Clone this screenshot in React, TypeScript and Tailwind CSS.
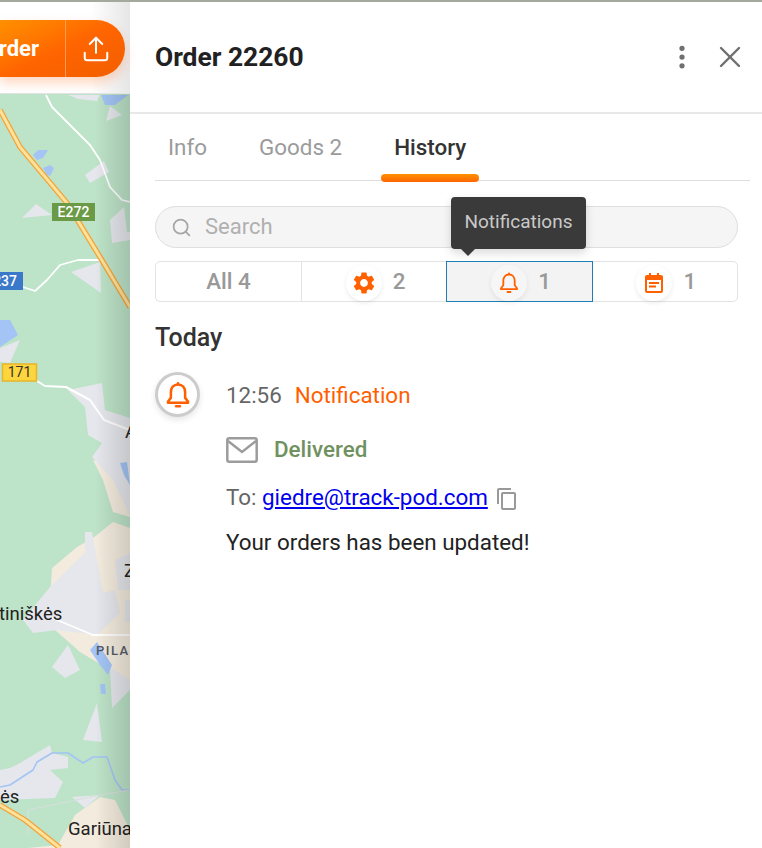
import { MoreVertical, Search, Upload, X } from "lucide-react";
import type { ReactNode } from "react";

function Bell({ className, stroke }: { className: string; stroke: string }) {
  return (
    <svg viewBox="0 0 24 24" className={className} fill="none" stroke="currentColor" strokeWidth={stroke}>
      <path d="M12 3.500c-3.600 0-5.700 2.700-5.700 6.200v4.600L4 17.200v1h16v-1l-2.300-2.900V9.700c0-3.500-2.100-6.200-5.700-6.200z" strokeLinejoin="round" />
      <path d="M10.500 21h3" strokeLinecap="round" />
      <circle cx="12" cy="2.500" r="1" fill="currentColor" stroke="none" />
    </svg>
  );
}

function Gear() {
  return (
    <svg viewBox="0 0 24 24" className="w-[26px] h-[26px] text-[#ff6000]" fill="currentColor">
      <path d="M19.140 12.940c.04-.3.06-.61.06-.94 0-.32-.02-.64-.07-.94l2.030-1.580c.18-.14.23-.41.12-.61l-1.920-3.320c-.12-.22-.37-.29-.59-.22l-2.390.96c-.5-.38-1.030-.7-1.620-.94l-.36-2.540c-.04-.24-.24-.41-.48-.41h-3.840c-.24 0-.43.17-.47.41l-.36 2.540c-.59.24-1.130.57-1.620.94l-2.390-.96c-.22-.08-.47 0-.59.22L2.740 8.870c-.12.21-.08.47.12.61l2.030 1.580c-.05.3-.09.63-.09.94s.02.64.07.94l-2.030 1.580c-.18.14-.23.41-.12.61l1.920 3.320c.12.22.37.29.59.22l2.390-.96c.5.38 1.030.7 1.620.94l.36 2.540c.05.24.24.41.48.41h3.840c.24 0 .44-.17.47-.41l.36-2.540c.59-.24 1.130-.56 1.620-.94l2.390.96c.22.08.47 0 .59-.22l1.920-3.320c.12-.22.07-.47-.12-.61l-2.010-1.580zM12 15.600c-1.980 0-3.600-1.620-3.600-3.600s1.620-3.600 3.600-3.600 3.600 1.620 3.600 3.600-1.620 3.600-3.600 3.600z" />
    </svg>
  );
}

function Planner() {
  return (
    <svg viewBox="0 0 24 24" className="w-[24px] h-[24px] text-[#ff6000]" fill="currentColor">
      <path d="M5 4h2V2h2v2h6V2h2v2h2a2 2 0 0 1 2 2v14a2 2 0 0 1-2 2H5a2 2 0 0 1-2-2V6a2 2 0 0 1 2-2zm0 5v11h14V9H5zm2 2h10v2H7v-2zm0 3.500h7v2H7v-2z" />
    </svg>
  );
}

function MapView() {
  return (
    <svg viewBox="0 94 130 754" className="w-[130px] h-[754px] block">
      <defs>
        <linearGradient id="edge" x1="0" x2="1" y1="0" y2="0">
          <stop offset="0" stopColor="#000" stopOpacity="0" />
          <stop offset="1" stopColor="#000" stopOpacity="0.14" />
        </linearGradient>
      </defs>
      <rect x="0" y="94" width="130" height="754" fill="#bde3c8" />

      <g fill="#f3ebdd">
        <polygon points="52,568 77,547 93,538 113,522 130,528 130,680 110,670 80,652 55,630 50,600" />
        <polygon points="93,460 103,480 113,512 130,517 130,470" />
        <polygon points="28,848 58,845 75,815 100,797 115,800 130,830 130,848" />
      </g>
      <g fill="#e5e7ec">
        <polygon points="68,95 100,95 97,101 78,99" />
        <polygon points="110,106 122,115 106,121" />
        <polygon points="85,175 104,161 109,172 90,183" />
        <polygon points="22,218 36,204 52,215 42,216" />
        <polygon points="110,220 124,207 127,232 130,232 130,240 112,243" />
        <polygon points="71,272 100,262 101,293" />
        <polygon points="0,348 20,340 10,363 0,362" />
        <polygon points="68,390 102,383 105,410 130,418 130,517 125,505 113,480 92,457 102,443 88,435 85,407" />
        <polygon points="85,532 92,532 103,593 115,590 120,613 97,635 57,630 33,633 23,620 50,587 85,553" />
        <polygon points="115,560 130,553 130,590 118,590" />
        <polygon points="125,600 130,600 130,622 125,622" />
        <polygon points="52,667 68,645 80,670 65,678" />
        <polygon points="110,667 130,680 130,690 112,708" />
        <polygon points="83,740 97,703 102,742" />
        <polygon points="20,763 50,745 52,753 68,757 68,768 50,770 63,782 55,798 0,800 0,770 10,768" />
        <polygon points="72,797 100,795 85,808" />
      </g>
      <g fill="#a3c4f5">
        <polygon points="33,155 38,150 48,150 43,158 37,160" />
        <polygon points="43,168 50,165 54,168 50,176 47,175" />
        <polygon points="101,95 128,95 115,105 105,105" />
        <polygon points="0,320 10,320 18,335 0,347" />
        <polygon points="120,463 127,462 130,485 124,475" />
        <polygon points="90,650 97,642 112,665 108,675 100,665" />
        <polygon points="100,684 105,684 106,694 101,694" />
      </g>

      <g fill="none" strokeLinejoin="round">
        <polyline points="46,95 52,107 90,145 100,160 110,187 122,200 130,202" stroke="#fff" strokeWidth="1.800" />
        <polyline points="100,260 78,260 60,265 47,280 35,291 23,287" stroke="#fff" strokeWidth="1.800" />
        <polyline points="37,381 45,386 66,387 90,400 104,420 130,430" stroke="#fff" strokeWidth="2" />
        <polyline points="50,617 93,635 130,635" stroke="#fff" strokeWidth="1.800" />
        <polyline points="0,787 10,785 33,770 37,762 52,753 68,753 83,763 93,757 107,757 115,780 122,790 130,790" stroke="#a3c4f5" strokeWidth="1.600" />
        <polyline points="28,835 28,810 100,795 130,790" stroke="#d5dfdc" strokeWidth="1.200" />
        <polyline points="0,110 20,147 67,203 100,257 130,307" stroke="#f2a33a" strokeWidth="5.500" />
        <polyline points="0,110 20,147 67,203 100,257 130,307" stroke="#fde29b" strokeWidth="3" />
        <polyline points="0,805 25,820 60,848" stroke="#f2a33a" strokeWidth="5.500" />
        <polyline points="0,805 25,820 60,848" stroke="#fde29b" strokeWidth="3" />
      </g>

      <rect x="52" y="203" width="43" height="18" fill="#6a9a45" />
      <text x="73.500" y="217" textAnchor="middle" fontSize="14" fontWeight="500" fill="#fff" fontFamily="Roboto, sans-serif">E272</text>
      <rect x="0" y="272" width="23" height="18" fill="#3a78c9" />
      <text x="17" y="286" textAnchor="end" fontSize="14" fontWeight="500" fill="#fff" fontFamily="Roboto, sans-serif">237</text>
      <rect x="2.500" y="364" width="34" height="17" fill="#fdd53c" stroke="#e9b52b" strokeWidth="1.500" />
      <text x="19.500" y="377" textAnchor="middle" fontSize="14" fill="#333" fontFamily="Roboto, sans-serif">171</text>

      <g fontFamily="Roboto, sans-serif" fill="#222" fontSize="18.500">
        <text x="-1" y="620">tiniškės</text>
        <text x="0" y="803">ės</text>
        <text x="68" y="835">Gariūna</text>
        <text x="125" y="438">A</text>
        <text x="124" y="577">Z</text>
      </g>
      <text x="96" y="655" fontFamily="Roboto, sans-serif" fontSize="13" fontWeight="500" letterSpacing="1.500" fill="#555b66">PILA</text>

      <rect x="95" y="94" width="35" height="754" fill="url(#edge)" />
    </svg>
  );
}

function FilterCell({ icon, count, active }: { icon: ReactNode; count: string; active?: boolean }) {
  return (
    <div
      className={
        active
          ? "flex-1 h-[41px] -my-px flex items-center justify-center gap-[11px] pl-[3px] bg-[#f3f3f3] border border-[#1c7fb5]"
          : "flex-1 h-full flex items-center justify-center gap-[11px] pl-[3px]"
      }
    >
      <span className={active ? "w-[36px] h-[36px] mt-[2px] rounded-full bg-[#f6f6f6] shadow-[0_2px_5px_rgba(0,0,0,0.08)] flex items-center justify-center" : "w-[36px] h-[36px] mt-[2px] rounded-full bg-white shadow-[0_2px_5px_rgba(0,0,0,0.08)] flex items-center justify-center"}>
        {icon}
      </span>
      <span className="text-[22.4px] font-medium text-[#999]">{count}</span>
    </div>
  );
}

export default function App() {
  return (
    <div className="w-[762px] h-[848px] overflow-hidden bg-white flex flex-col font-['Roboto',sans-serif]">
      <div className="h-[2px] shrink-0 bg-[#a4a9a0]" />
      <div className="flex flex-1 min-h-0">
        <div className="w-[130px] shrink-0 flex flex-col">
          <div className="h-[92px] shrink-0 bg-gradient-to-r from-white from-70% to-[#e6e6e6] flex justify-end pt-[18px] pr-[5px] border-b border-[#e3e3e3]">
            <div className="h-[57px] w-[125px] flex rounded-r-full bg-gradient-to-br from-[#ff9000] via-[#ff6500] to-[#f25e00] shadow-[0_6px_12px_rgba(255,96,0,0.25)]">
              <span className="w-[65px] flex items-center justify-end pr-[26px] text-[22px] font-bold text-white whitespace-nowrap">rder</span>
              <span className="flex-1 flex items-center justify-center border-l border-[#ff9a55]">
                <Upload className="w-[30px] h-[30px] text-white" strokeWidth={1.600} />
              </span>
            </div>
          </div>
          <MapView />
        </div>

        <div className="flex-1 min-w-0 flex flex-col">
          <div className="h-[112px] shrink-0 border-b-2 border-[#e8e8e8] flex items-center pl-[25px] pr-[14px]">
            <h1 className="flex-1 pt-[2px] text-[26.4px] font-bold text-[#212121]">Order 22260</h1>
            <MoreVertical className="w-[30px] h-[30px] text-[#6f6f6f]" strokeWidth={2.200} />
            <X className="w-[36px] h-[36px] ml-[15px] text-[#6f6f6f]" strokeWidth={1.600} />
          </div>

          <div className="mx-[25px] mr-[12px] h-[67px] shrink-0 border-b border-[#dedede] flex pl-[13px] items-start pt-[17px]">
            <span className="text-[22.4px] text-[#9b9b9b]">Info</span>
            <span className="ml-[52px] text-[22.4px] text-[#9b9b9b]">Goods 2</span>
            <span className="relative ml-[52px] text-[22.4px] font-medium text-[#333]">
              History
              <span className="absolute left-[-13px] right-[-13px] top-[43px] h-[8px] rounded-full bg-gradient-to-b from-[#ff9000] to-[#ff6500]" />
            </span>
          </div>

          <div className="relative ml-[25px] mr-[24px] mt-[25px] h-[42px] shrink-0 rounded-full border border-[#dfdfdf] bg-[#f5f5f5] flex items-center pl-[15px] gap-[13px]">
            <Search className="w-[21px] h-[21px] text-[#a6a6a6]" strokeWidth={2} />
            <span className="pb-[2px] text-[22px] text-[#b0b0b0]">Search</span>
            <div className="absolute left-[295px] top-[-10px] w-[135px] h-[52px] rounded-[4px] bg-[#3a3a3a] shadow-[0_4px_10px_rgba(0,0,0,0.15)] flex items-center justify-center pb-[1px] text-[19px] text-[#c9c9c9]">
              Notifications
              <span className="absolute left-[10px] bottom-[-7px] w-0 h-0 border-x-[7px] border-x-transparent border-t-[7px] border-t-[#3a3a3a]" />
            </div>
          </div>

          <div className="ml-[25px] mr-[24px] mt-[13px] h-[41px] shrink-0 rounded-[5px] border border-[#e3e3e3] flex items-center">
            <div className="w-[146px] h-full border-r border-[#e3e3e3] flex items-center justify-center text-[22.4px] font-medium text-[#999]">All 4</div>
            <FilterCell icon={<Gear />} count="2" />
            <FilterCell active icon={<Bell className="w-[24px] h-[24px] text-[#ff6000]" stroke="1.800" />} count="1" />
            <FilterCell icon={<Planner />} count="1" />
          </div>

          <h2 className="ml-[25px] mt-[20px] text-[25px] leading-[32px] font-medium text-[#333]">Today</h2>

          <div className="ml-[25px] mt-[18px] flex items-start gap-[26px]">
            <div className="w-[45px] h-[45px] shrink-0 rounded-full border-[3px] border-[#cccccc] shadow-[0_3px_6px_rgba(0,0,0,0.1)] flex items-center justify-center">
              <Bell className="w-[30px] h-[30px] text-[#ff5f00]" stroke="2" />
            </div>
            <div className="flex flex-col">
              <div className="flex items-center gap-[13px] h-[46px] text-[22.4px] leading-[28px]">
                <span className="text-[#666]">12:56</span>
                <span className="text-[#ff5f00]">Notification</span>
              </div>
              <div className="flex items-center gap-[16px] mt-[16px] h-[32px]">
                <svg viewBox="0 0 32 26" className="w-[32px] h-[26px] text-[#9c9c9c]" fill="none" stroke="currentColor" strokeWidth="2.500">
                  <rect x="1.300" y="1.300" width="29.400" height="23.400" rx="2" />
                  <path d="M2 4l14 11L30 4" />
                </svg>
                <span className="text-[22.4px] font-medium text-[#6f9160]">Delivered</span>
              </div>
              <div className="flex items-center mt-[16px] h-[32px] text-[22.4px]">
                <span className="text-[#666]">To:&nbsp;</span>
                <a href="#" className="text-[#0000ee] underline">giedre@track-pod.com</a>
                <svg viewBox="0 0 24 24" className="w-[24px] h-[24px] ml-[7px] mt-[2px] text-[#999]" fill="currentColor">
                  <path d="M16 1H4c-1.100 0-2 .9-2 2v14h2V3h12V1zm3 4H8c-1.100 0-2 .9-2 2v14c0 1.100.9 2 2 2h11c1.100 0 2-.9 2-2V7c0-1.100-.9-2-2-2zm0 16H8V7h11v14z" />
                </svg>
              </div>
              <p className="mt-[12px] text-[22.4px] leading-[32px] text-[#222]">Your orders has been updated!</p>
            </div>
          </div>
        </div>
      </div>
    </div>
  );
}
